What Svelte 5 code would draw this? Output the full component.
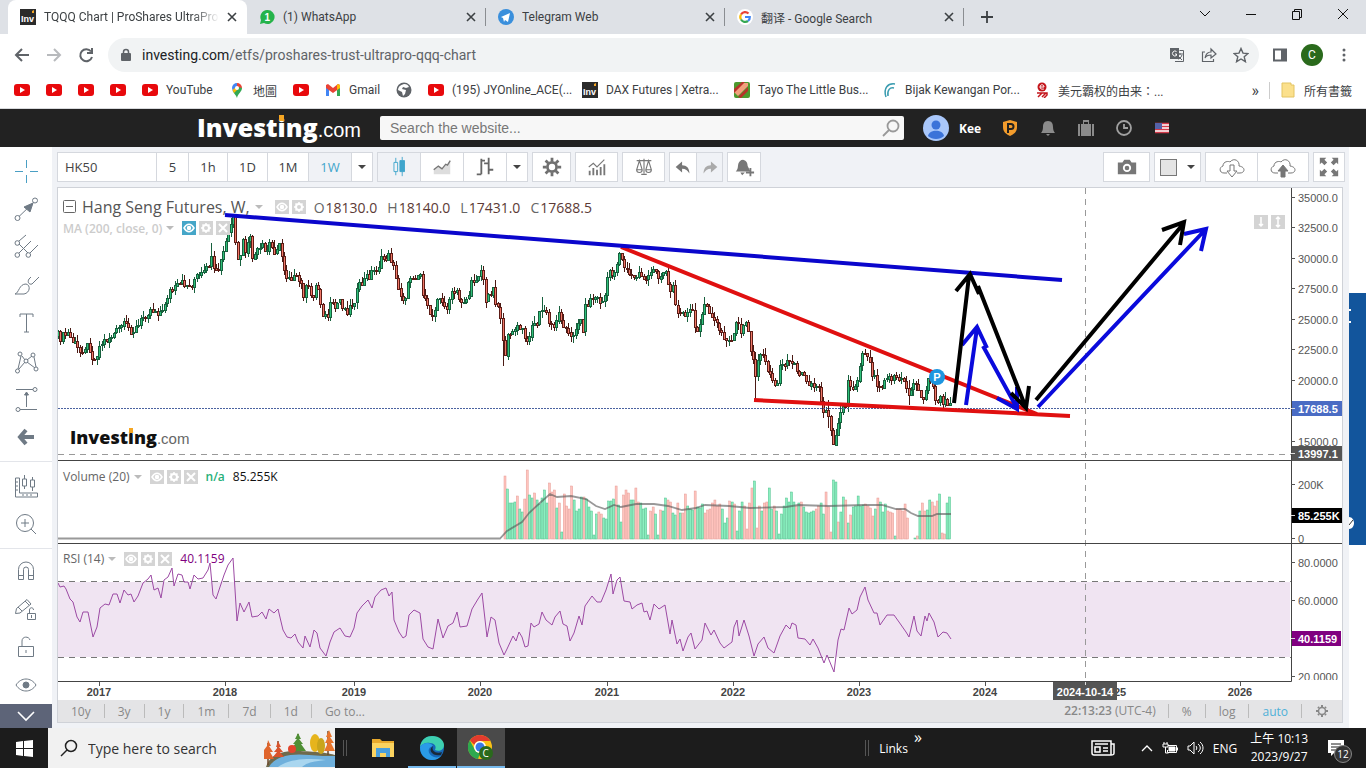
<script>
    const tabs = [
        { icon: 'inv', title: 'TQQQ Chart | ProShares UltraPro', active: true },
        { icon: 'whatsapp', title: '(1) WhatsApp' },
        { icon: 'telegram', title: 'Telegram Web' },
        { icon: 'google', title: '翻译 - Google Search' }
    ];

    const bookmarks = [
        { icon: 'youtube' },
        { icon: 'youtube' },
        { icon: 'youtube' },
        { icon: 'youtube' },
        { icon: 'youtube', title: 'YouTube', w: 47 },
        { icon: 'maps', title: '地圖', w: 24 },
        { icon: 'youtube' },
        { icon: 'gmail', title: 'Gmail', w: 31 },
        { icon: 'globe' },
        { icon: 'youtube', title: '(195) JYOnline_ACE(...', w: 114 },
        { icon: 'inv', title: 'DAX Futures | Xetra...', w: 112 },
        { icon: 'tayo', title: 'Tayo The Little Bus...', w: 107 },
        { icon: 'bijak', title: 'Bijak Kewangan Por...', w: 113 },
        { icon: 'red', title: '美元霸权的由来：...', w: 108 }
    ];

    const ranges = ['10y', '3y', '1y', '1m', '7d', '1d', 'Go to...'];

    // left rail tools, drawn in a 28x28 box
    const tools = [
        [
            { name: 'Cross', blue: true, d: 'M14.500 3v8M14.500 18v8M3 14.500h8M18 14.500h8' },
            { name: 'Trend line', d: 'M7 21.500L20 9M3 23a2.500 2.500 0 1 0 5 0a2.500 2.500 0 1 0-5 0M20.500 5.500a2.500 2.500 0 1 0 5 0a2.500 2.500 0 1 0-5 0', fill: 'M21 8l-3 9-6-5z' },
            { name: 'Pitchfork', d: 'M7 8l7-6M7 11l9 9M7 20L19 8M18 20l8-8M3 10a2.300 2.300 0 1 0 4.600 0a2.300 2.300 0 1 0-4.600 0M3 22a2.300 2.300 0 1 0 4.600 0a2.300 2.300 0 1 0-4.600 0M14 22a2.300 2.300 0 1 0 4.600 0a2.300 2.300 0 1 0-4.600 0' },
            { name: 'Brush', d: 'M3 23c4-1 4-10 11-10 5 1 4 9-2 10H3M17 8c-2 3 0 6 3 5l7-7M17 8l2-2' },
            { name: 'Text', d: 'M8 8V5h13v3M14.500 5v18M12 23h5' },
            { name: 'Patterns', d: 'M6 22l3-13M10 9l3 4M15 13l5-4M22 10l2 10M7 22l6-7M15 15l8 6M6 7a2 2 0 1 0 4 0a2 2 0 1 0-4 0M19 8a2 2 0 1 0 4 0a2 2 0 1 0-4 0M12 14a2 2 0 1 0 4 0a2 2 0 1 0-4 0M3.500 24a2 2 0 1 0 4 0a2 2 0 1 0-4 0M22 22a2 2 0 1 0 4 0a2 2 0 1 0-4 0' },
            { name: 'Measure', d: 'M4 4.500h17M8 24.500h17M14.500 22V8M21 4.500a2 2 0 1 0 4 0a2 2 0 1 0-4 0M4 24.500a2 2 0 1 0 4 0a2 2 0 1 0-4 0', fill: 'M14.500 7l2 3h-4z' },
            { name: 'Back', bold: true, d: 'M22 14H8M14 7l-6 7 6 7' }
        ],
        [
            { name: 'Scale', d: 'M3.500 6v19h22v-4h-18V6zM12.500 3v4M12.500 14v3M10.500 7h4v7h-4zM20.500 5v3M20.500 15v4M18.500 8h4v7h-4zM4 10h2M4 14h2M4 18h2M11 24v-2M15 24v-2M19 24v-2' },
            { name: 'Zoom in', d: 'M4.500 13a8.500 8.500 0 1 0 17 0a8.500 8.500 0 1 0-17 0M19 19l5 5M13 9v8M9 13h8' }
        ],
        [
            { name: 'Magnet', d: 'M6.500 22.500v-10a7.500 7.500 0 0 1 15 0v10h-5v-10a2.500 2.500 0 0 0-5 0v10zM6.500 18.500h5M16.500 18.500h5' },
            { name: 'Stay drawing', d: 'M3.500 18.500l1-5L15 4.500l4 4.500L8 18zM6 12l4 4M13 6l4 4M15.500 18.500h8v6h-8zM17.500 18v-3c0-3 4-3 4 0M19.500 20v3' },
            { name: 'Lock', d: 'M6.500 13.500h15v10h-15zM10 13V8c0-5 7-5 8-1M14 17v3' },
            { name: 'Hide', d: 'M4 14c5-8 15-8 20 0-5 8-15 8-20 0z', fill: 'M11 14a3 3 0 1 0 6 0a3 3 0 1 0-6 0' }
        ]
    ];

    // anchor points of the weekly close: x, y
    const closes = [
        58,336, 62,337, 68,333, 72,340, 76,345, 80,352, 84,346, 90,346, 93,358, 95,360, 98,350, 101,344, 106,340, 112,335, 118,331, 122,325,
        128,327, 134,330, 138,327, 143,317, 150,309, 157,310, 163,313, 166,299, 170,291, 174,290, 179,285, 185,283, 190,287, 195,278, 200,276,
        206,272, 211,258, 214,272, 217,274, 221,263, 225,247, 229,232, 233,216, 235,232, 237,266, 240,258, 243,242, 246,252, 250,238, 253,257,
        258,252, 263,247, 266,255, 270,243, 274,250, 279,244, 282,255, 286,275, 290,274, 294,278, 300,281, 304,293, 308,287, 312,297, 317,284,
        319,290, 322,308, 327,320, 331,305, 335,309, 340,299, 346,310, 351,307, 355,298, 361,284, 368,276, 374,271, 378,267, 383,258, 389,257,
        394,262, 396,280, 399,290, 404,298, 407,292, 411,275, 415,275, 421,274, 424,299, 428,310, 433,316, 438,292, 443,306, 446,309, 450,298,
        456,291, 460,301, 468,298, 472,283, 478,274, 483,268, 486,305, 490,290, 494,288, 497,305, 500,310, 503,335, 506,364, 508,338, 511,328,
        515,330, 520,327, 524,334, 528,347, 531,323, 536,325, 541,311, 545,309, 549,323, 553,326, 560,312, 565,325, 571,340, 575,328, 580,320,
        584,328, 586,306, 590,300, 595,297, 600,300, 604,302, 608,280, 611,266, 614,278, 617,262, 621,249, 624,268, 629,272, 633,280, 640,272,
        648,281, 652,272, 656,268, 660,277, 666,268, 669,290, 674,290, 677,307, 682,310, 685,320, 691,306, 696,330, 702,315, 706,306, 712,315,
        718,327, 724,338, 728,342, 734,334, 738,319, 741,338, 745,321, 748,328, 751,347, 754,361, 756,378, 759,358, 763,352, 767,365, 771,372,
        775,388, 780,370, 785,362, 789,365, 793,358, 797,370, 802,375, 808,380, 814,385, 819,388, 822,402, 826,413, 831,425, 834,442, 837,427,
        840,410, 843,408, 846,405, 848,382, 853,387, 857,383, 861,358, 864,352, 867,349, 869,360, 873,373, 877,380, 881,388, 885,375, 890,378,
        895,375, 900,380, 906,385, 910,396, 914,380, 918,390, 922,400, 926,388, 929,380, 934,388, 937,403, 941,400, 945,402, 951,407
    ];

    function noise(i) {
        const v = Math.sin(i * 12.9898) * 43758.5453;
        return v - Math.floor(v) - 0.5;
    }

    function closeAt(x) {
        for (let i = 2; i < closes.length; i += 2) {
            if (x <= closes[i]) {
                const t = (x - closes[i - 2]) / (closes[i] - closes[i - 2]);
                return closes[i - 1] + t * (closes[i + 1] - closes[i - 1]);
            }
        }
        return closes[closes.length - 1];
    }

    const longWicks = { 211: [243, 270], 504: [330, 366], 756: [352, 399], 542: [297, 318], 829: [400, 428], 909: [380, 405] };
    const candles = [];
    let open = 336;
    for (let i = 0; i < 368; i++) {
        const x = 58.5 + i * 2.43;
        const close = closeAt(x) + noise(i) * 10;
        let top = Math.min(open, close);
        let bottom = Math.max(open, close);
        let high = top - Math.abs(noise(i + 500)) * 13;
        let low = bottom + Math.abs(noise(i + 900)) * 13;
        for (const [wx, [a, b]] of Object.entries(longWicks)) {
            if (Math.abs(x - wx) < 1.22) {
                high = Math.min(high, a);
                low = Math.max(low, b);
            }
        }
        candles.push({
            x: Math.floor(x) + 0.5,
            top: Math.round(top) + 0.5,
            height: Math.max(1, Math.round(bottom - top)),
            high: Math.max(high, 214),
            low: Math.min(low, 445),
            up: close < open
        });
        open = close;
    }

    // weekly volume, minus sign marks a falling week
    const volumes = [
        -63,50,36,36,37,-43,30,27,-40,-69,44,41,-46,39,35,41,49,36,-56,-47,-49,31,-36,7,-45,-33,-30,-53,39,28,30,42,-42,40,32,28,
        4,25,-27,-25,21,20,38,38,40,-53,34,17,-44,-49,-46,39,39,-51,-37,36,30,31,4,-28,-32,25,4,-29,28,41,-39,-37,26,24,-36,26,
        -26,-45,33,30,29,-48,32,31,35,-26,-29,-30,-36,-39,-33,-35,30,16,21,-38,37,-35,8,28,37,-33,-10,-36,-51,58,-11,-33,28,
        -36,-37,51,30,-33,28,5,25,33,41,37,47,37,-33,36,-37,32,27,26,27,28,-30,-33,36,25,-47,-32,-7,59,57,-17,27,42,-39,16,-24,
        32,33,43,33,34,-35,-33,-31,-23,30,-41,37,27,35,-28,-27,-26,3,-30,-30,-28,-35,-21,0,0,1,-3,28,-36,-28,29,39,-37,-33,
        -38,45,-6,-5,36,42
    ];
    const volStep = 447 / volumes.length;

    const volumeAvg = '58,538.500 500,538.500 507,531 522,522 529,513 541,502 550,494 557,497 571,496 586,499 596,506 605,509 614,505 621,507 636,504 654,504 668,506 682,510 696,508 705,505 729,506 750,508 786,507 798,505 829,506 864,505 882,505 896,509 905,509 911,513 918,516 932,516 937,514 951,514';

    const rsi = '58,583 60,587 64,586 66,589 70,599 73,602 77,617 80,622 83,612 88,612 93,637 97,627 100,608 105,604 109,605 113,594 117,594 120,603 124,590 128,595 131,594 134,602 138,596 143,583 148,579 151,575 154,590 158,588 161,598 164,580 168,577 172,568 174,586 178,574 182,575 184,582 188,582 190,589 194,575 198,579 203,578 208,570 210,563 213,595 216,599 220,587 224,575 228,565 233,558 237,621 240,603 244,612 249,602 252,617 258,616 262,612 266,619 269,609 274,613 278,609 283,630 287,637 291,638 295,634 298,642 303,648 305,636 310,647 314,630 317,633 320,648 326,656 330,642 334,632 340,628 345,636 350,637 354,628 357,613 362,606 368,600 372,608 375,597 381,590 386,588 389,596 392,592 394,620 399,632 403,638 406,636 409,615 414,610 420,613 423,639 428,647 433,649 438,619 443,638 448,626 453,623 457,612 460,627 467,626 472,609 478,599 482,593 487,637 491,617 495,620 499,643 504,655 507,649 513,636 516,641 519,632 522,637 525,647 528,646 531,623 534,627 539,624 542,612 546,620 552,625 555,617 560,611 563,624 567,626 570,641 574,633 579,616 582,625 585,606 592,596 597,602 601,602 606,590 611,574 613,594 617,580 620,577 624,601 630,602 632,609 637,605 642,603 644,612 647,611 650,620 654,604 659,609 665,605 670,634 672,620 677,644 680,639 683,651 688,637 691,633 695,649 702,640 705,623 711,635 714,630 720,643 724,648 732,642 734,627 737,620 739,636 744,620 749,636 754,656 758,644 764,637 768,648 774,653 780,636 786,625 790,629 792,623 796,625 798,638 805,639 810,645 813,639 818,648 824,663 827,655 834,672 838,640 841,629 844,630 849,608 852,614 857,610 860,597 865,587 868,600 874,613 877,613 880,625 887,615 894,615 899,622 906,632 909,637 914,616 917,631 921,636 925,616 927,621 929,613 934,622 938,637 943,632 947,633 951,639';

    const priceAxis = [
        ['35000.0', 198], ['32500.0', 228], ['30000.0', 259], ['27500.0', 289], ['25000.0', 320], ['22500.0', 350], ['20000.0', 381],
        ['15000.0', 442], ['200K', 485], ['0', 539], ['80.0000', 563], ['60.0000', 601], ['20.0000', 677]
    ];
    // 2025 is half hidden by the crosshair date
    const years = [[2017, 99], [2018, 225], [2019, 354], [2020, 480], [2021, 607], [2022, 733], [2023, 859], [2024, 985], [25, 1120], [2026, 1240]];
    const tags = [
        { text: '17688.5', y: 409, fill: '#4a6cc4', w: 50 },
        { text: '13997.1', y: 454, fill: '#555', w: 50 },
        { text: '85.255K', y: 516, fill: '#000', w: 51 },
        { text: '40.1159', y: 639, fill: '#800080', w: 49 }
    ];
</script>

{#snippet siteIcon(name)}
    <svg class="site-icon" viewBox="0 0 16 16" aria-hidden="true">
        {#if name === 'youtube'}
            <rect y="2" width="16" height="12" rx="3" fill="#e8090c" />
            <path d="M6 5l5 3-5 3z" fill="#fff" />
        {:else if name === 'inv'}
            <rect width="16" height="16" fill="#2b2b2b" />
            <text x="1" y="13" font-size="9" font-weight="bold" fill="#fff">Inv</text>
            <path d="M12 2l2-1v3h-2z" fill="#f5a623" />
        {:else if name === 'whatsapp'}
            <path d="M8 1a7 7 0 1 1-3 13l-4 1 1-4A7 7 0 0 1 8 1z" fill="#25b34b" />
            <text x="5.500" y="12" font-size="10" font-weight="bold" fill="#fff">1</text>
        {:else if name === 'telegram'}
            <circle cx="8" cy="8" r="8" fill="#3a8fdc" />
            <path d="M3 8l9-4-2 9-3-2-1 2-1-4z" fill="#fff" />
        {:else if name === 'google'}
            <circle cx="8" cy="8" r="8" fill="#fff" />
            <g fill="none" stroke-width="2.200">
                <path d="M11.500 4.500A4.800 4.800 0 0 0 4 5.500" stroke="#ea4335" />
                <path d="M4 5.500a4.800 4.800 0 0 0 0 5" stroke="#fbbc05" />
                <path d="M4 10.500a4.800 4.800 0 0 0 7 1.500" stroke="#34a853" />
                <path d="M11 12a4.800 4.800 0 0 0 1.800-4H8" stroke="#4285f4" />
            </g>
        {:else if name === 'maps'}
            <path d="M3 6a5 5 0 0 1 5-5v5L4 10z" fill="#4285f4" />
            <path d="M8 1a5 5 0 0 1 5 5L8 7z" fill="#ea4335" />
            <path d="M13 6c0 4-4 5-5 10-1-3-3-4-4-7l5-4z" fill="#34a853" />
            <path d="M3.500 8L7 5l1 3-3 3z" fill="#fbbc05" />
            <circle cx="8" cy="6" r="2" fill="#fff" />
        {:else if name === 'gmail'}
            <path d="M1 4v10h3V7z" fill="#4285f4" />
            <path d="M15 4v10h-3V7z" fill="#34a853" />
            <path d="M1 3l2-1 5 4 5-4 2 1v3l-7 5-7-5z" fill="#ea4335" />
            <path d="M12 3l1-1 2 1v3l-3 2z" fill="#fbbc05" />
        {:else if name === 'globe'}
            <circle cx="8" cy="8" r="7.500" fill="#5f6368" />
            <path d="M8 2c3 0 4 1 5 3l-3 1-3-1-1 2 4 1-1 4-2 2-1-4-4-2c0-3 2-5 6-6z" fill="#fff" />
        {:else if name === 'tayo'}
            <rect width="16" height="16" rx="2" fill="#4d9a2e" />
            <path d="M0 10L9 1h5v3L4 14z" fill="#f2a07c" />
            <path d="M0 7l8-7h3L0 11zM4 15L14 5v4l-7 7z" fill="#b8322a" />
        {:else if name === 'bijak'}
            <path d="M14 2C7 1 2 6 5 15M13 6C9 5 6 8 7 14" fill="none" stroke="#3a9cb0" stroke-width="1.500" />
        {:else if name === 'red'}
            <circle cx="8" cy="5" r="4.500" fill="#c4161c" />
            <path d="M6 5h4c0-3-4-3-4 0s4 2 4 2" fill="none" stroke="#fff" />
            <path d="M3 11h10v2l-3 3M4 15l4-4M8 15l4-4" fill="none" stroke="#c4161c" stroke-width="1.500" />
        {/if}
    </svg>
{/snippet}

{#snippet logo()}
    <span class="logo"><b>Invest<span class="dotted">i</span>ng</b><span>.com</span></span>
{/snippet}

{#snippet legendButtons(kinds, first)}
    <span class="legend-buttons">
        {#each kinds as kind, i}
            <button class:on={i === 0 && first} aria-label={kind}>
                <svg viewBox="0 0 14 14" fill="none" stroke="#fff" stroke-width="1.500">
                    {#if kind === 'Show'}
                        <path d="M2 7c3-5 7-5 10 0-3 5-7 5-10 0z" /><circle cx="7" cy="7" r="1.500" fill="#fff" />
                    {:else if kind === 'Settings'}
                        <circle cx="7" cy="7" r="3" stroke-width="2" /><path d="M7 2v2M7 10v2M2 7h2M10 7h2M3.500 3.500l1 1M9.500 9.500l1 1M3.500 10.500l1-1M9.500 4.500l1-1" />
                    {:else}
                        <path d="M3 3l8 8M11 3l-8 8" stroke-width="2" />
                    {/if}
                </svg>
            </button>
        {/each}
    </span>
{/snippet}

<div class="screen">
    <div class="tabs">
        {#each tabs as tab}
            <div class="tab" class:active={tab.active}>
                {@render siteIcon(tab.icon)}
                <span class="tab-title">{tab.title}</span>
                <button aria-label="Close tab">
                    <svg width="10" height="10" viewBox="0 0 10 10"><path d="M1 1l8 8M9 1L1 9" stroke="#3c4043" stroke-width="1.600" /></svg>
                </button>
            </div>
        {/each}
        <button class="new-tab" aria-label="New tab">
            <svg width="14" height="14" viewBox="0 0 14 14"><path d="M7 1v12M1 7h12" stroke="#3c4043" stroke-width="1.800" /></svg>
        </button>
        <div class="window-buttons">
            <button aria-label="Search tabs"><svg viewBox="0 0 12 12"><path d="M1 3l5 5 5-5" /></svg></button>
            <button aria-label="Minimize"><svg viewBox="0 0 12 12"><path d="M1 6.500h10" /></svg></button>
            <button aria-label="Restore"><svg viewBox="0 0 12 12"><path d="M1.500 3.500h7v8h-7zM3.500 3V1.500h7v8H9" /></svg></button>
            <button aria-label="Close"><svg viewBox="0 0 12 12"><path d="M1 1l10 10M11 1L1 11" /></svg></button>
        </div>
    </div>

    <div class="address-row">
        <button aria-label="Back"><svg viewBox="0 0 16 16"><path d="M15 8H2M8 2L2 8l6 6" stroke="#5f6368" stroke-width="2" /></svg></button>
        <button aria-label="Forward"><svg viewBox="0 0 16 16"><path d="M1 8h13M8 2l6 6-6 6" stroke="#b8babd" stroke-width="2" /></svg></button>
        <button aria-label="Reload"><svg viewBox="0 0 16 16"><path d="M13 4.500A6 6 0 1 0 14 10M14 1v5H9" stroke="#5f6368" stroke-width="2" /></svg></button>
        <div class="omnibox">
            <svg width="10" height="14" viewBox="0 0 10 14"><rect y="5" width="10" height="8" rx="1" fill="#5f6368" /><path d="M2.500 6V4a2.500 2.500 0 0 1 5 0v2" fill="none" stroke="#5f6368" stroke-width="1.500" /></svg>
            <a class="url" href="#top">investing.com<span>/etfs/proshares-trust-ultrapro-qqq-chart</span></a>
            <button aria-label="Translate"><svg viewBox="0 0 16 16"><rect x="1" y="1" width="9" height="11" fill="#5f6368" /><path d="M6 14.500h8.500v-11h-4M8 7h6M11 6v2M13 8c-1 3-3 4-4 4M9 9l4 4" stroke="#5f6368" /><path d="M7.500 4.500a2.500 2.500 0 1 0 0 4V7H6" stroke="#fff" /></svg></button>
            <button aria-label="Share"><svg viewBox="0 0 16 16"><path d="M4 5H1.500v9.500h11V12M4 11c1-5 4-6 6-6V2l5 5-5 4V8C7 8 5 9 4 11z" stroke="#5f6368" stroke-width="1.200" /></svg></button>
            <button aria-label="Bookmark"><svg viewBox="0 0 16 16"><path d="M8 1.500l2 4.600 5 .4-3.800 3.300 1.200 4.900L8 12l-4.400 2.700 1.200-4.900L1 6.500l5-.4z" stroke="#5f6368" stroke-width="1.400" /></svg></button>
        </div>
        <button aria-label="Side panel"><svg viewBox="0 0 16 16"><rect x="2" y="2.500" width="12" height="11" stroke="#5f6368" stroke-width="2" /><path d="M9 2h5v12H9z" fill="#5f6368" /></svg></button>
        <button class="profile">C</button>
        <button aria-label="Menu"><svg viewBox="0 0 16 16"><circle cx="8" cy="3" r="1.500" fill="#5f6368" /><circle cx="8" cy="8" r="1.500" fill="#5f6368" /><circle cx="8" cy="13" r="1.500" fill="#5f6368" /></svg></button>
    </div>

    <div class="bookmarks">
        {#each bookmarks as mark}
            <a href="#top" aria-label={mark.title ?? 'YouTube'}>
                {@render siteIcon(mark.icon)}
                {#if mark.title}<span style="width: {mark.w}px">{mark.title}</span>{/if}
            </a>
        {/each}
        <button class="more">»</button>
        <a class="all" href="#top">
            <svg class="site-icon" viewBox="0 0 16 16"><path d="M2 1h9v2h3v12H2z" fill="#fbe08c" stroke="#e3c463" /></svg>
            <span>所有書籤</span>
        </a>
    </div>

    <header class="site-header">
        {@render logo()}
        <form class="search">
            <input type="text" placeholder="Search the website..." aria-label="Search the website" />
            <svg width="18" height="18" viewBox="0 0 18 18" fill="none" stroke="#999" stroke-width="1.800"><circle cx="11" cy="7" r="5.500" /><path d="M7 11l-6 6" /></svg>
        </form>
        <svg class="avatar" viewBox="0 0 26 26"><circle cx="13" cy="13" r="13" fill="#a9c7fa" /><circle cx="13" cy="10" r="4.500" fill="#3b73d9" /><path d="M5 21c1-7 15-7 16 0-4 4-12 4-16 0z" fill="#3b73d9" /></svg>
        <b>Kee</b>
        <div class="header-icons">
            <svg viewBox="0 0 18 18"><path d="M2 3l7-2 7 2v5c0 5-3 7-7 9-4-2-7-4-7-9z" fill="#f39c2c" /><path d="M7 14V5h3a2.500 2.500 0 0 1 0 5H7" fill="none" stroke="#222" stroke-width="2" /></svg>
            <svg viewBox="0 0 18 18" fill="#8b8b8b"><path d="M9 2c4 0 5 3 5 6s1 5 2 6H2c1-1 2-3 2-6s1-6 5-6zM7 15h4l-2 2z" /></svg>
            <svg viewBox="0 0 18 18" fill="#8b8b8b"><path d="M1 5h2v12H1zM4 5h10v12H4zM15 5h2v12h-2zM6 1h6v4h-1V3H7v2H6z" /></svg>
            <svg viewBox="0 0 18 18" fill="none" stroke="#a0a0a0" stroke-width="1.800"><circle cx="9" cy="9" r="7" /><path d="M9 5v4h4" /></svg>
            <svg viewBox="0 0 18 18"><rect x="2" y="4" width="14" height="10" fill="#fff" /><path d="M2 4.500h14M2 7.500h14M2 10.500h14M2 13.500h14" stroke="#d33a4a" stroke-width="1.500" /><rect x="2" y="4" width="7" height="6" fill="#5562a8" /></svg>
        </div>
    </header>

    <main>
        <nav class="rail">
            {#each tools as group}
                <div class="tool-group">
                    {#each group as tool}
                        <button aria-label={tool.name} class:blue={tool.blue} class:bold={tool.bold}>
                            <svg width="28" height="28" viewBox="0 0 28 28">
                                <path d={tool.d} />
                                {#if tool.fill}<path class="solid" d={tool.fill} />{/if}
                            </svg>
                        </button>
                    {/each}
                </div>
            {/each}
            <button class="rail-more" aria-label="More">
                <svg width="20" height="14" viewBox="0 0 20 14"><path d="M2 3l8 8 8-8" fill="none" stroke="#fff" stroke-width="1.600" /></svg>
            </button>
        </nav>

        <section class="workspace">
            <div class="chart-toolbar">
                <div class="group">
                    <input class="symbol" type="text" value="HK50" aria-label="Symbol" />
                    <button class="w32">5</button>
                    <button class="w39">1h</button>
                    <button class="w40">1D</button>
                    <button class="w41">1M</button>
                    <button class="w43 active">1W</button>
                    <button class="w21" aria-label="Intervals"><i class="caret"></i></button>
                </div>
                <div class="group">
                    <button class="w42 active" aria-label="Candles"><svg viewBox="0 0 24 24" fill="none" stroke="#3fa5cc"><path d="M8.500 2v5M8.500 17v4M6.500 7h4v10h-4zM15.500 1v4M15.500 17v5" /><path d="M13 5h5v12h-5z" fill="#3fa5cc" /></svg></button>
                    <button class="w43" aria-label="Area"><svg viewBox="0 0 24 24"><path d="M3 20v-6l5-3 4 3 9-8v14z" fill="#ddd" /><path d="M3 15l5-4 4 3 4-5 2 1 3-5" fill="none" stroke="#777" stroke-width="1.500" /></svg></button>
                    <button class="w43" aria-label="Bars"><svg viewBox="0 0 24 24" fill="none" stroke="#666" stroke-width="2"><path d="M3 20h5M8 3v17M8 5h4M16 2v18M11 8h5M16 15h5" /></svg></button>
                    <button class="w21" aria-label="Chart styles"><i class="caret"></i></button>
                </div>
                <div class="group">
                    <button class="w37" aria-label="Properties"><svg viewBox="0 0 24 24" fill="none" stroke="#707070"><circle cx="12" cy="12" r="5" stroke-width="3" /><path d="M12 2v4M12 18v4M2 12h4M18 12h4M5 5l3 3M16 16l3 3M5 19l3-3M16 8l3-3" stroke-width="3" /></svg></button>
                </div>
                <div class="group">
                    <button class="w41" aria-label="Indicators"><svg viewBox="0 0 24 24" fill="none" stroke="#777"><path d="M4 21v-5M8 21v-8M12 21v-6M16 21v-9M20 21V9" stroke-width="2" /><path d="M3 12l5-4 4 4 8-8" stroke-width="1.200" /></svg></button>
                </div>
                <div class="group">
                    <button class="w41" aria-label="Compare"><svg viewBox="0 0 24 24" fill="none" stroke="#777" stroke-width="1.200"><path d="M4 5h16M12 3v16M9 20h6M7 5L4 15h6zM17 5l-3 10h6zM4 15c0 4 6 4 6 0M14 15c0 4 6 4 6 0" /></svg></button>
                </div>
                <div class="group">
                    <button class="w26" aria-label="Undo"><svg viewBox="0 0 24 24" fill="#777"><path d="M4 12l7-6v4c5 0 8 3 8 9-2-3-4-5-8-5v4z" /></svg></button>
                    <button class="w26 off" aria-label="Redo"><svg viewBox="0 0 24 24" fill="#aaa"><path d="M20 12l-7-6v4c-5 0-8 3-8 9 2-3 4-5 8-5v4z" /></svg></button>
                </div>
                <div class="group">
                    <button class="w32" aria-label="Add alert"><svg viewBox="0 0 24 24" fill="#777"><path d="M11 4c4 1 5 4 5 7l3 6H3c3-3 2-6 3-9 1-2 2-4 5-4zM8 18h5l-3 3z" /><path d="M19 13v9M14 18h9" stroke="#777" stroke-width="2" /></svg></button>
                </div>
                <div class="group right">
                    <button class="w45" aria-label="Snapshot"><svg viewBox="0 0 24 24"><path d="M2 7h5l2-3h6l2 3h5v13H2z" fill="#777" /><circle cx="12" cy="13" r="3.500" fill="none" stroke="#fff" stroke-width="2" /></svg></button>
                </div>
                <div class="group">
                    <button class="w45 color" aria-label="Color"><span></span><i class="caret"></i></button>
                </div>
                <div class="group">
                    <button class="w51" aria-label="Load"><svg class="cloud" viewBox="0 0 28 24"><path d="M9 18H6c-5 0-5-6-1-7 0-5 6-5 7-4 4-5 10-1 9 4 7 1 6 7 1 7h-3" /><path d="M12 10h4v6h3l-5 6-5-6h3z" fill="#fff" /></svg></button>
                    <button class="w51" aria-label="Save"><svg class="cloud" viewBox="0 0 28 24"><path d="M9 18H6c-5 0-5-6-1-7 0-5 6-5 7-4 4-5 10-1 9 4 7 1 6 7 1 7h-3" /><path d="M12 22h4v-6h3l-5-6-5 6h3z" fill="#777" /></svg></button>
                </div>
                <div class="group">
                    <button class="w30" aria-label="Full screen"><svg viewBox="0 0 24 24" fill="#777"><path d="M2 2h7L7 4l3 3-3 3-3-3-2 2zM22 2v7l-2-2-3 3-3-3 3-3-2-2zM2 22v-7l2 2 3-3 3 3-3 3 2 2zM22 22h-7l2-2-3-3 3-3 3 3 2-2z" /></svg></button>
                </div>
            </div>

            <div class="chart-box">
                <div class="chart">
                    <svg class="plot" viewBox="58 188 1284 512">
                        <!-- rsi band -->
                        <rect x="58" y="582" width="1232" height="75" fill="#f0e4f2" />
                        <path d="M58 581.500H1291M58 657.500H1291" class="dash" />

                        <!-- volume -->
                        {#each volumes as v, i}
                            <rect x={504 + i * volStep} y={539 - Math.abs(v)} width="2" height={Math.abs(v)} fill={v < 0 ? '#ffc4be' : '#8cefc0'} stroke={v < 0 ? '#e59c96' : '#4fbf8c'} stroke-width="0.500" />
                        {/each}
                        <polyline points={volumeAvg} fill="none" stroke="#555" stroke-opacity="0.600" stroke-width="1.800" />

                        <polyline points={rsi} fill="none" stroke="#9c4aa4" stroke-width="1" />

                        <!-- price -->
                        <g shape-rendering="crispEdges">
                            {#each candles as c}
                                <path d="M{c.x} {c.high}V{c.low}" stroke={c.up ? '#17603d' : '#4a1a14'} />
                                <rect x={c.x - 1} y={c.top} width="2" height={c.height} fill={c.up ? '#2fc07a' : '#f07868'} stroke={c.up ? '#17603d' : '#5c1c16'} />
                            {/each}
                        </g>
                        <path d="M58 408.500H1291" stroke="#4a62a0" stroke-dasharray="2 1" />
                        <path d="M58 454.500H1291M1085.500 188V681" class="dash cross" />

                        <g fill="none" stroke-width="4">
                            <path d="M621 247L1037 414M754 400L1070 416" stroke="#e01010" />
                            <path d="M225 215L1062 280" stroke="#0a06cc" />
                            <path d="M966 405L977 328M962 345l15-18 10 21M983 346l34 62M997 398l20 11V387M1038 407L1205 230M1184 234l22-5-5 22" stroke="#0a0adc" />
                            <path d="M954 403L969 276M956 291l14-17 9 20M978 286l48 122M1011 393l15 15 3-22M1036 400L1184 223M1162 230l22-8-4 23" stroke="#000" />
                        </g>
                        <circle cx="937" cy="377" r="8" fill="#1e96e0" />
                        <text x="937" y="381" class="pin">P</text>

                        <!-- pane borders and axes -->
                        <path d="M58 460.500H1342M58 543.500H1342M58 681.500H1291.500V188" fill="none" stroke="#444" />
                        {#each priceAxis as [label, y]}
                            <path d="M1291 {y - 0.5}h4" stroke="#555" />
                            <text x="1298" y={y + 4} class="axis">{label}</text>
                        {/each}
                        <rect x="1292" y="680" width="50" height="20" fill="#fff" />
                        {#each years as [year, x]}
                            <path d="M{x + 0.5} 682v{year > 2000 ? 4 : 0}" stroke="#555" />
                            <text {x} y="696" class="year">{year}</text>
                        {/each}
                        {#each tags as tag}
                            <rect x="1292" y={tag.y - 8} width={tag.w} height="15" fill={tag.fill} />
                            <path d="M1291 {tag.y - 0.5}h4" stroke="#ddd" />
                            <text x="1298" y={tag.y + 4} class="tag">{tag.text}</text>
                        {/each}
                        <rect x="1053" y="682" width="64" height="18" fill="#555" />
                        <path d="M1085.500 682v3" stroke="#ddd" />
                        <text x="1085" y="696" class="tag center">2024-10-14</text>

                        <g fill="#d4d4d4"><rect x="1254" y="215" width="14" height="14" /><rect x="1271" y="215" width="14" height="14" /></g>
                        <path d="M1261 217v9M1259 224l2 2 2-2M1278 217v10M1276 219l2-2 2 2M1276 225l2 2 2-2" fill="none" stroke="#fff" stroke-width="1.500" />
                    </svg>

                    <div class="legend main">
                        <div class="legend-row title">
                            <svg width="14" height="14" viewBox="0 0 14 14" fill="none" stroke="#666"><rect x="0.500" y="0.500" width="12" height="12" rx="1" /><path d="M3 6.500h7" /></svg>
                            <span class="name">Hang Seng Futures, W,</span>
                            <i class="caret light"></i>
                            {@render legendButtons(['Show', 'Settings'], false)}
                            <span class="ohlc"><span>O<b>18130.0</b></span><span>H<b>18140.0</b></span><span>L<b>17431.0</b></span><span>C<b>17688.5</b></span></span>
                        </div>
                        <div class="legend-row ma">
                            <span>MA (200, close, 0)</span>
                            <i class="caret light"></i>
                            {@render legendButtons(['Show', 'Settings', 'Remove'], true)}
                        </div>
                    </div>
                    <div class="chart-logo">{@render logo()}</div>
                    <div class="legend volume">
                        <div class="legend-row">
                            <span>Volume (20)</span>
                            <i class="caret light"></i>
                            {@render legendButtons(['Show', 'Settings', 'Remove'], false)}
                            <span class="na">n/a</span>
                            <span class="black">85.255K</span>
                        </div>
                    </div>
                    <div class="legend rsi">
                        <div class="legend-row">
                            <span>RSI (14)</span>
                            <i class="caret light"></i>
                            {@render legendButtons(['Show', 'Settings', 'Remove'], false)}
                            <span class="purple">40.1159</span>
                        </div>
                    </div>
                </div>
                <div class="range-bar">
                    {#each ranges as range}
                        <button>{range}</button>
                    {/each}
                    <span class="clock"><b>22:13:23</b> (UTC-4)</span>
                    <button>%</button>
                    <button>log</button>
                    <button class="auto">auto</button>
                    <button aria-label="Scale settings"><svg width="14" height="14" viewBox="0 0 14 14" fill="none" stroke="#888"><circle cx="7" cy="7" r="3.500" stroke-width="1.500" /><path d="M7 1v2M7 11v2M1 7h2M11 7h2M3 3l1 1M10 10l1 1M3 11l1-1M10 4l1-1" stroke-width="2" /></svg></button>
                </div>
            </div>
        </section>
        <aside><div class="banner">
            <svg width="6" height="18" viewBox="0 0 6 18"><path d="M0 2h2v2H0zM0 14h2v2H0z" fill="#fff" /></svg>
            <svg width="6" height="16" viewBox="0 0 6 16"><path d="M0 2c3 0 5 3 5 6s-2 6-5 6z" fill="#fff" /><path d="M0 10l4-5" stroke="#333" /></svg>
        </div></aside>
    </main>

    <footer>
        <button class="start" aria-label="Start"><svg width="17" height="17" viewBox="0 0 17 17" fill="#fff"><path d="M0 2l7-1v7H0zM8 1l9-1v8H8zM0 9h7v7l-7-1zM8 9h9v8l-9-1z" /></svg></button>
        <div class="task-search">
            <svg width="18" height="18" viewBox="0 0 18 18" fill="none" stroke="#222" stroke-width="1.500"><circle cx="11" cy="7" r="5.500" /><path d="M7 11l-6 6" /></svg>
            <input type="text" placeholder="Type here to search" aria-label="Type here to search" />
            <svg width="71" height="38" viewBox="0 0 71 38" aria-hidden="true">
                <path d="M2 38c3-10 12-16 28-16s36 2 41 4v12z" fill="#6f6a4c" />
                <path d="M5 38c6-11 22-14 40-12 10 1 18 1 26 1v11z" fill="#6fb0dc" />
                <path d="M14 38c10-8 30-9 48-7-12 1-20 3-24 7z" fill="#a9d6ef" />
                <path d="M34 22V5M4 36V14M64 26V2M14 28V12" stroke="#6b4a2c" stroke-width="1.500" />
                <ellipse cx="51" cy="14" rx="5" ry="9" fill="#e6b41c" />
                <ellipse cx="57" cy="17" rx="4" ry="8" fill="#c9a51b" />
                <path d="M34 4l3 6h-2l4 5h-2l5 7H26l5-7h-2l4-5h-2z" fill="#4f8f35" />
                <path d="M4 11l3 6H5l4 6H6l4 7H0v-9l3-4z" fill="#e0652c" />
                <path d="M14 12l3 6h-2l4 5h-3l4 5H9l4-5h-3l4-5h-2z" fill="#d9532b" />
                <path d="M65 1l3 7h-2l4 6h-3l4 8H60l4-8h-3l3-6h-2z" fill="#e8752c" />
                <circle cx="28" cy="20" r="4" fill="#e2452c" />
            </svg>
        </div>
        <span class="handle"></span>
        <div class="apps">
            <button aria-label="File Explorer"><svg width="24" height="24" viewBox="0 0 24 24"><path d="M1 3h8l2 2h12v15H1z" fill="#e8a92c" /><path d="M1 7h22v14H1z" fill="#fbd35f" /><path d="M5 12h14v9h-4v-4H9v4H5z" fill="#4a9fdc" /></svg></button>
            <button class="open" aria-label="Edge"><svg width="24" height="24" viewBox="0 0 24 24"><circle cx="12" cy="12" r="12" fill="#1768b8" /><path d="M0 11C1 3 7 0 12 0c8 0 12 5 12 9 0 5-5 7-9 5 2-4-1-7-5-7-4-1-8 1-10 4z" fill="#3ed0b0" /><path d="M0 11c3-5 11-5 13-1-6 1-6 9 1 11 3 1 6 0 8-2-5 8-22 7-22-8z" fill="#2a9be8" /><path d="M13 10c-2 5 3 8 9 6l-1 3c-8 2-14-5-8-9z" fill="#1a2a3a" /></svg></button>
            <button class="open current" aria-label="Chrome"><svg width="26" height="26" viewBox="0 0 26 26"><circle cx="12" cy="12" r="12" fill="#fbc116" /><path d="M12 0a12 12 0 0 1 10.400 6H12a6 6 0 0 0-5.500 4L2 5.500A12 12 0 0 1 12 0z" fill="#e33b2e" /><path d="M1.800 5.500L7 15c1 2 3 3 5 3l-2 6A12 12 0 0 1 1.800 5.500z" fill="#2da94f" /><circle cx="12" cy="12" r="6" fill="#fff" /><circle cx="12" cy="12" r="4.500" fill="#3b78e7" /><circle cx="18" cy="18" r="7" fill="#2a6a1c" /><text x="14.500" y="22" font-size="10" fill="#fff">C</text></svg></button>
        </div>
        <span class="handle links-handle"></span>
        <span class="links">Links</span>
        <span class="chevrons">»</span>
        <svg class="news" width="24" height="18" viewBox="0 0 24 18" fill="none" stroke="#fff" stroke-width="1.500"><path d="M1 2h19v14H3c-2 0-2-1-2-2zM20 5h3v9c0 2-1 2-3 2M4 5h13M12 9h5M12 12h5M4 8h5v5H4z" /></svg>
        <svg width="12" height="8" viewBox="0 0 12 8" fill="none" stroke="#fff" stroke-width="1.300"><path d="M1 7l5-5 5 5" /></svg>
        <svg width="16" height="14" viewBox="0 0 16 14" fill="none" stroke="#fff"><path d="M6 4.500h8.500v7h-9V9M15.500 6.500v3M1 3h5v3H1zM2 1v2M5 1v2M3.500 6v6h3" /><path d="M7 6h6v4H7z" fill="#fff" /></svg>
        <svg width="17" height="14" viewBox="0 0 17 14" fill="none" stroke="#fff"><path d="M1 5h2l4-4v12L3 9H1zM9 5c1 1 1 3 0 4M11 3c3 2 3 6 0 8M13 1c4 3 4 9 0 12" /></svg>
        <span class="lang">ENG</span>
        <span class="datetime"><span>上午 10:13</span><span>2023/9/27</span></span>
        <button class="notice" aria-label="Notifications">
            <svg width="16" height="16" viewBox="0 0 16 16"><path d="M0 0h16v13H6l-3 3v-3H0z" fill="#fff" /><path d="M3 4h10M3 7h10M3 10h6" stroke="#1c1c1c" /></svg>
            <span>12</span>
        </button>
    </footer>
</div>

<style>
    :global(body) {
        margin: 0;
        background: #fff;
    }
    .screen {
        min-height: 100vh;
        display: flex;
        flex-direction: column;
        font-family: "Open Sans", "Noto Sans CJK TC", sans-serif;
        font-size: 12px;
        color: #3c4043;
    }
    button {
        padding: 0;
        border: none;
        background: none;
        font: inherit;
        color: inherit;
        display: flex;
        align-items: center;
        justify-content: center;
    }
    a {
        color: inherit;
        text-decoration: none;
    }
    input {
        border: none;
        outline: none;
        min-width: 0;
        font: inherit;
    }
    svg {
        flex: none;
        display: block;
    }
    .site-icon {
        width: 16px;
        height: 16px;
        font-family: "Liberation Sans", sans-serif;
    }

    /* browser */
    .tabs, .address-row, .bookmarks {
        font-family: Roboto, "Noto Sans CJK TC", sans-serif;
    }
    .tabs {
        display: flex;
        height: 34px;
        padding-left: 8px;
        background: #dee1e6;
    }
    .tab {
        width: 239px;
        box-sizing: border-box;
        display: flex;
        align-items: center;
        gap: 8px;
        padding: 0 10px 0 12px;
        position: relative;
    }
    .tab.active {
        background: #fff;
        border-radius: 8px 8px 0 0;
    }
    .tab:not(.active)::after {
        content: "";
        position: absolute;
        right: 0;
        top: 8px;
        height: 18px;
        border-right: 1px solid #8a8d91;
    }
    .tab-title {
        flex: 1;
        overflow: hidden;
        white-space: nowrap;
    }
    .tab.active .tab-title {
        mask-image: linear-gradient(90deg, #000 85%, transparent);
    }
    .new-tab {
        width: 46px;
    }
    .window-buttons {
        display: flex;
        margin-left: auto;
    }
    .window-buttons button {
        width: 46px;
        height: 28px;
    }
    .window-buttons svg {
        width: 12px;
        height: 12px;
        fill: none;
        stroke: #111;
    }
    .address-row {
        display: flex;
        align-items: center;
        height: 42px;
        padding: 0 6px;
    }
    .address-row button {
        width: 32px;
        height: 32px;
    }
    .address-row button svg {
        width: 16px;
        height: 16px;
        fill: none;
    }
    .omnibox {
        flex: 1;
        display: flex;
        align-items: center;
        height: 34px;
        margin: 0 5px 0 6px;
        padding: 0 2px 0 13px;
        border-radius: 17px;
        background: #f1f3f4;
    }
    .url {
        flex: 1;
        margin-left: 11px;
        font-size: 14px;
        color: #202124;
    }
    .url span {
        color: #5f6368;
    }
    .address-row .profile {
        width: 22px;
        height: 22px;
        margin: 0 5px;
        border-radius: 50%;
        background: #2a6a1c;
        color: #fff;
    }
    .bookmarks {
        display: flex;
        align-items: center;
        gap: 16px;
        height: 28px;
        padding: 0 14px 4px;
        border-bottom: 1px solid #d8dadd;
        white-space: nowrap;
    }
    .bookmarks a {
        display: flex;
        align-items: center;
        gap: 8px;
    }
    .more {
        margin-left: auto;
        font-size: 16px;
    }
    .bookmarks .all {
        padding-left: 10px;
        margin-left: -6px;
        border-left: 1px solid #ccc;
    }

    /* site header */
    .site-header {
        display: flex;
        align-items: center;
        height: 38px;
        padding-left: 197px;
        background: #222;
        color: #fff;
    }
    .logo {
        display: flex;
        align-items: baseline;
        font-size: 25px;
        line-height: 36px;
        width: 183px;
    }
    .logo b {
        font-weight: 800;
    }
    .logo > span {
        font-family: "Liberation Sans", sans-serif;
        font-size: 20px;
    }
    .dotted {
        position: relative;
    }
    .dotted::before {
        content: "";
        position: absolute;
        left: 20%;
        top: 16%;
        width: 60%;
        height: 18%;
        background: #f5a623;
    }
    .search {
        display: flex;
        align-items: center;
        flex: 1;
        max-width: 524px;
        height: 24px;
        padding-right: 4px;
        box-sizing: border-box;
        background: #f7f7f7;
        border-radius: 2px;
    }
    .search input {
        flex: 1;
        padding: 0 10px;
        background: none;
        font-family: "Liberation Sans", sans-serif;
        font-size: 14px;
    }
    .search input::placeholder {
        color: #777;
    }
    .avatar {
        width: 26px;
        height: 26px;
        margin: 0 10px 0 19px;
    }
    .header-icons {
        display: flex;
        gap: 20px;
        margin-left: 20px;
    }
    .header-icons svg {
        width: 18px;
        height: 18px;
    }

    /* workspace */
    main {
        flex: 1;
        display: flex;
        background: #f0f2f6;
    }
    .rail {
        display: flex;
        flex-direction: column;
        width: 52px;
        background: #fff;
    }
    .tool-group {
        padding: 5px 0;
        border-bottom: 1px solid #e3e5ea;
    }
    .tool-group:nth-child(3) {
        padding: 3px 0 0;
        border-bottom: none;
    }
    .tool-group button {
        width: 52px;
        height: 38px;
    }
    .tool-group svg {
        fill: none;
        stroke: #6f7a85;
    }
    .tool-group .solid {
        fill: #6f7a85;
    }
    .tool-group .blue svg {
        stroke: #4a9fc4;
    }
    .tool-group .bold svg {
        stroke-width: 4;
    }
    .rail-more {
        margin-top: auto;
        height: 24px;
        background: #5d6478;
    }
    .workspace {
        flex: 1;
        min-width: 0;
        padding: 5px 6px 5px 5px;
    }
    .chart-toolbar {
        display: flex;
        gap: 4px;
        height: 35px;
        margin-right: -2px;
        font-size: 13px;
    }
    .group {
        display: flex;
        height: 30px;
        box-sizing: border-box;
        border: 1px solid #d5d8de;
        background: #fff;
    }
    .group button + button, .symbol + button {
        border-left: 1px solid #d5d8de;
    }
    .group .active {
        background: #f0f2f6;
        color: #3fa5cc;
    }
    .group .off {
        background: #f0f2f6;
    }
    .group svg {
        width: 22px;
        height: 22px;
    }
    .group .cloud {
        width: 28px;
        height: 24px;
        fill: none;
        stroke: #777;
    }
    .symbol {
        width: 98px;
        padding: 0 7px;
        box-sizing: border-box;
        color: #444;
    }
    .w21 { width: 21px; }
    .w26 { width: 26px; }
    .w30 { width: 30px; }
    .w32 { width: 32px; }
    .w37 { width: 37px; }
    .w39 { width: 39px; }
    .w40 { width: 40px; }
    .w41 { width: 41px; }
    .w42 { width: 42px; }
    .w43 { width: 43px; }
    .w45 { width: 45px; }
    .w51 { width: 51px; }
    .right {
        margin-left: auto;
    }
    .color {
        gap: 10px;
    }
    .color span {
        width: 15px;
        height: 15px;
        border: 1px solid #777;
        background: #e4e4e4;
    }
    .caret {
        border: 4px solid transparent;
        border-top-color: #444;
        border-bottom: none;
    }
    .caret.light {
        border-top-color: #bbb;
    }
    .chart-box {
        border: 1px solid #cfd2d8;
        background: #fff;
    }
    .chart {
        position: relative;
    }
    .plot {
        width: 100%;
        height: auto;
        font-family: "Liberation Sans", sans-serif;
        font-size: 11px;
    }
    .dash {
        fill: none;
        stroke: #777;
        stroke-dasharray: 6 5;
    }
    .cross {
        stroke: #999;
    }
    .axis {
        fill: #555;
    }
    .year {
        fill: #444;
        font-weight: bold;
        text-anchor: middle;
    }
    .tag {
        fill: #fff;
        font-weight: bold;
    }
    .center, .pin {
        text-anchor: middle;
    }
    .pin {
        fill: #fff;
        font-weight: bold;
    }
    .legend {
        position: absolute;
        left: 5px;
        color: #666;
    }
    .legend.main {
        top: 9px;
    }
    .legend.volume {
        top: 55%;
    }
    .legend.rsi {
        top: 71%;
    }
    .legend-row {
        display: flex;
        align-items: center;
        height: 14px;
        white-space: nowrap;
    }
    .legend-row.title {
        height: 20px;
    }
    .name {
        margin-left: 5px;
        font-size: 16px;
        color: #555;
    }
    .legend-row .caret {
        margin: 0 8px 0 4px;
    }
    .title .caret {
        margin: 0 12px 0 5px;
    }
    .ma {
        margin-top: 4px;
        color: #ccc;
        font-weight: 600;
    }
    .legend-buttons {
        display: flex;
        gap: 3px;
    }
    .legend-buttons button {
        width: 14px;
        height: 14px;
        background: #d4d4d4;
    }
    .legend-buttons .on {
        background: #45a6c8;
    }
    .legend-buttons svg {
        width: 14px;
        height: 14px;
    }
    .ohlc {
        display: flex;
        gap: 10px;
        margin-left: 8px;
        font-size: 14px;
    }
    .ohlc b {
        margin-left: 1px;
        font-weight: 400;
        color: #5c3a36;
    }
    .na, .black, .purple {
        margin-left: 8px;
    }
    .na {
        color: #27b07a;
        font-weight: 600;
    }
    .black {
        color: #111;
    }
    .purple {
        color: #800080;
    }
    .chart-logo {
        position: absolute;
        left: 12px;
        top: 46%;
        color: #111;
    }
    .chart-logo .logo {
        font-size: 18px;
        line-height: 26px;
    }
    .chart-logo .logo > span {
        font-size: 15px;
        color: #666;
    }
    .range-bar {
        display: flex;
        align-items: center;
        height: 22px;
        background: #e4e4e6;
        color: #888;
    }
    .range-bar button {
        height: 14px;
        padding: 0 13px;
        border-right: 1px solid #bbb;
    }
    .range-bar button:last-child, .range-bar button:nth-child(7) {
        border: none;
    }
    .clock {
        margin-left: auto;
        padding-right: 12px;
        border-right: 1px solid #bbb;
        line-height: 14px;
    }
    .clock b {
        font-weight: 600;
    }
    .range-bar .auto {
        color: #4fb0d8;
    }
    aside {
        width: 17px;
        background: #fff;
    }
    .banner {
        display: flex;
        flex-direction: column;
        justify-content: space-between;
        height: 252px;
        margin-top: 146px;
        padding: 14px 0;
        box-sizing: border-box;
        background: #12559c;
    }

    /* taskbar */
    footer {
        display: flex;
        align-items: center;
        height: 40px;
        background: #1c1c1c;
        color: #fff;
    }
    .start {
        width: 48px;
        height: 40px;
    }
    .task-search {
        display: flex;
        align-items: center;
        width: 287px;
        height: 40px;
        padding-left: 12px;
        box-sizing: border-box;
        background: #f1f1f1;
    }
    .task-search input {
        flex: 1;
        padding: 0 0 0 10px;
        background: none;
        font-size: 14px;
    }
    .task-search input::placeholder {
        color: #333;
    }
    .handle {
        width: 2px;
        height: 16px;
        margin: 0 12px 0 8px;
        border: 1px solid #555;
        border-width: 0 1px;
        box-sizing: content-box;
    }
    .apps {
        display: flex;
        gap: 1px;
    }
    .apps button {
        width: 48px;
        height: 40px;
        box-sizing: border-box;
        border: 2px solid transparent;
        border-width: 2px 0;
    }
    .apps .open {
        border-bottom-color: #76b9ed;
    }
    .apps .current {
        background: #4a4a4a;
        border-top-color: #4a4a4a;
    }
    .links-handle {
        margin: 0 10px 0 auto;
    }
    .chevrons {
        align-self: flex-start;
        margin: 0 169px 0 6px;
        font-size: 16px;
        line-height: 18px;
    }
    .news {
        margin-right: 26px;
    }
    footer > svg + svg {
        margin-right: 9px;
    }
    .datetime {
        display: flex;
        flex-direction: column;
        align-items: center;
        margin: 0 18px 0 13px;
        line-height: 18px;
    }
    .notice {
        position: relative;
        width: 20px;
        height: 24px;
        margin-right: 20px;
    }
    .notice span {
        position: absolute;
        left: 8px;
        top: 9px;
        width: 16px;
        height: 16px;
        border: 1px solid #888;
        border-radius: 50%;
        background: #333;
        font-size: 10px;
        line-height: 16px;
        text-align: center;
    }
</style>
